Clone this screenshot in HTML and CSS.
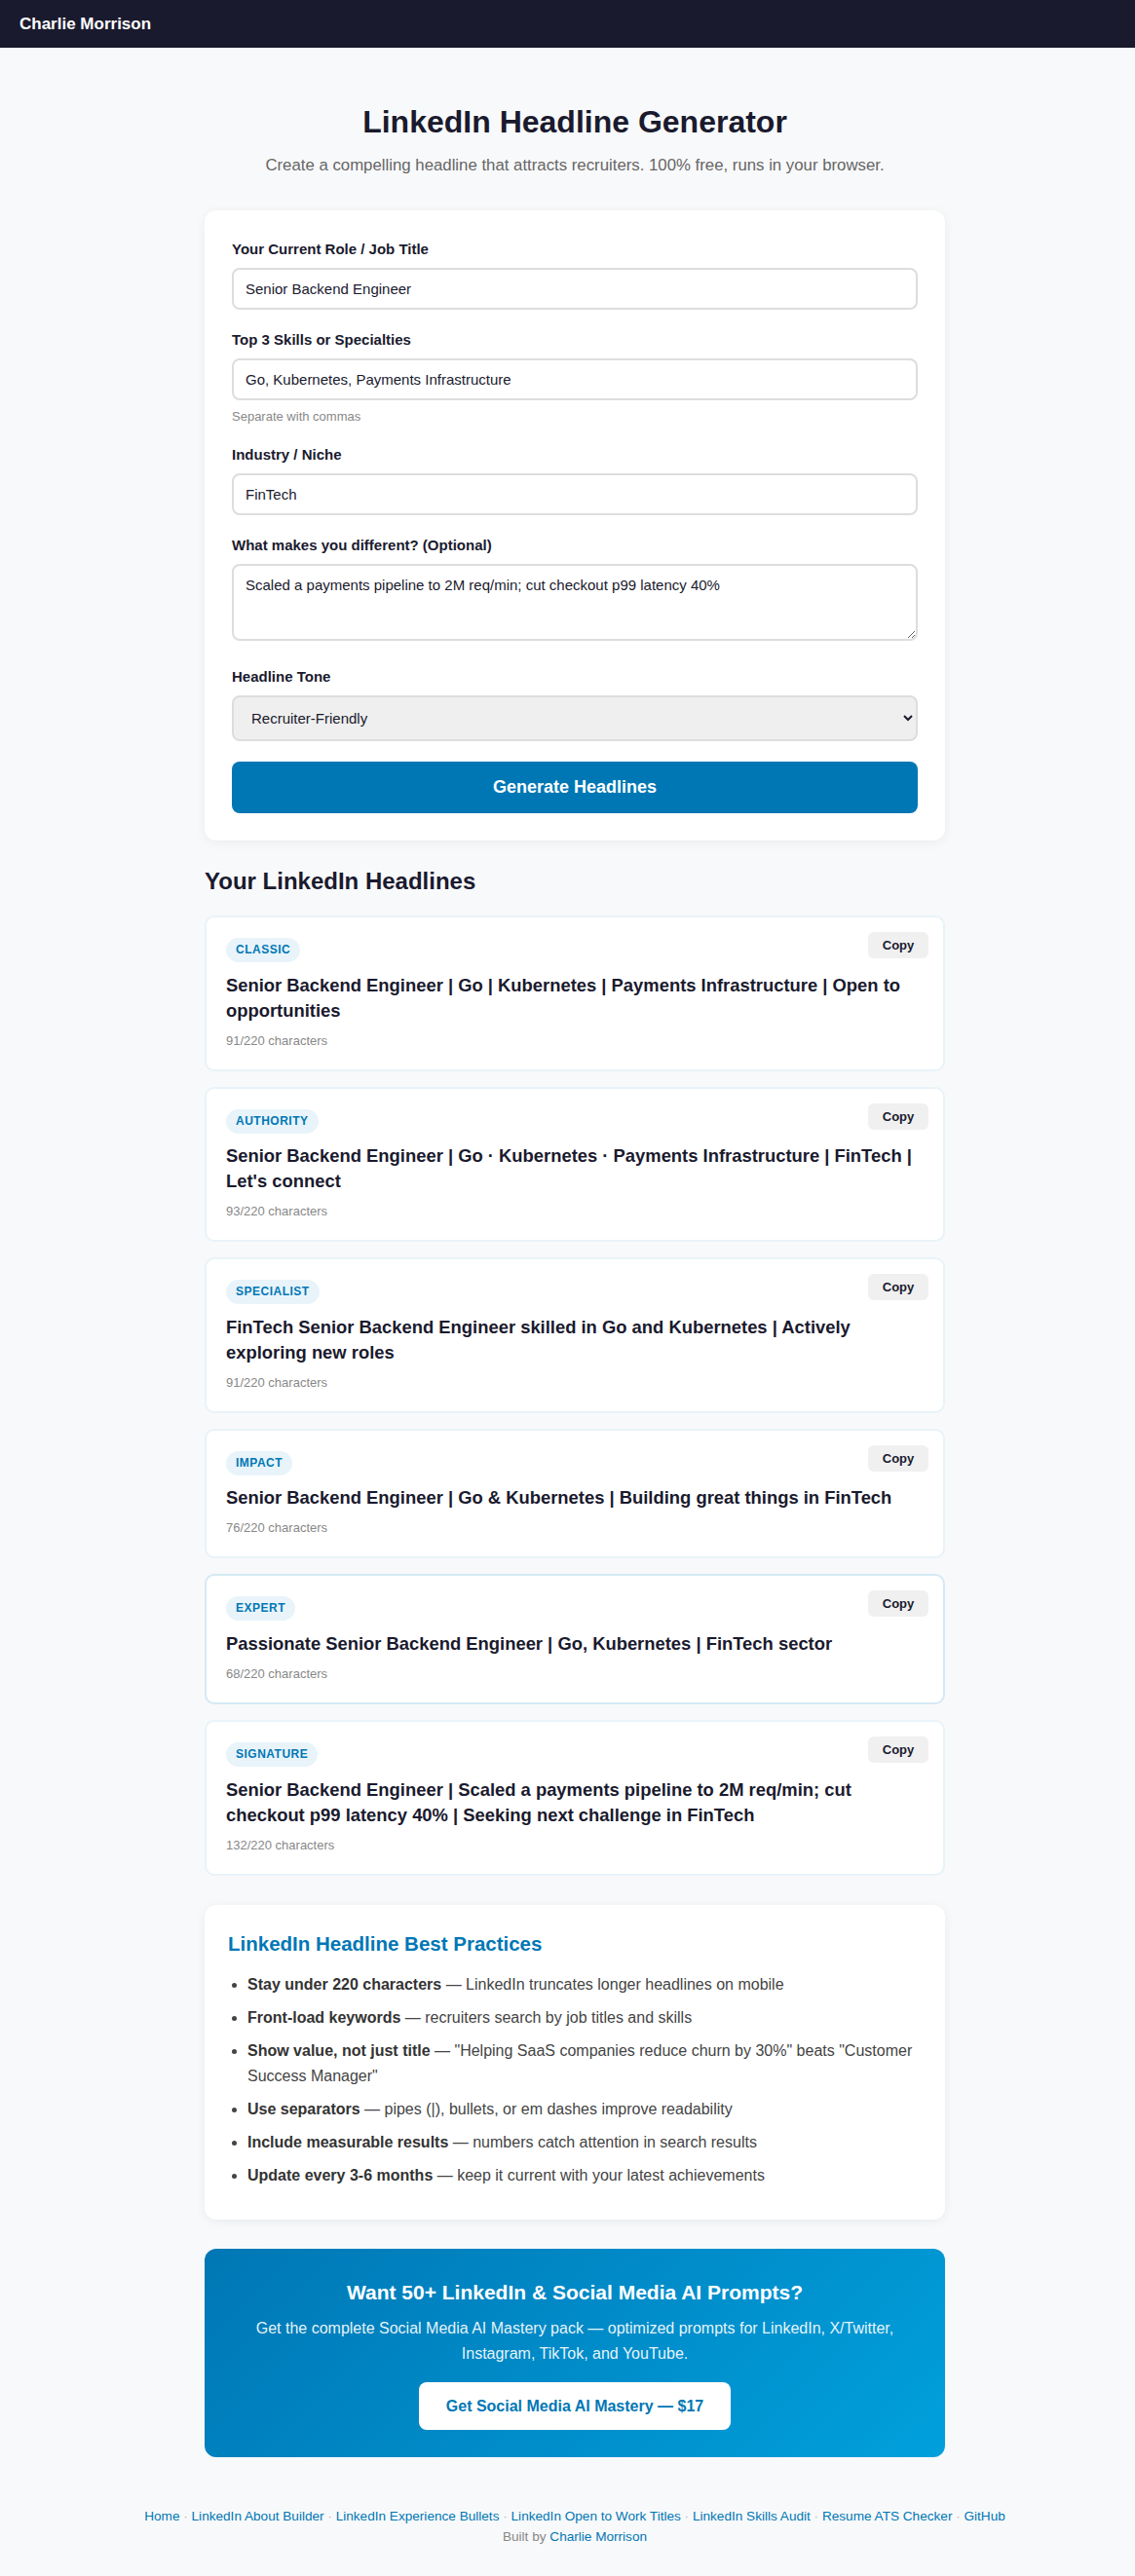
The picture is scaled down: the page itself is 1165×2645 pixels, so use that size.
FILE: index.html
```html
<!DOCTYPE html>
<html lang="en">
<head>
<meta charset="utf-8">
<title>LinkedIn Headline Generator — Charlie Morrison</title>
<link rel="stylesheet" href="styles.css">
</head>
<body>
<nav class="topbar">
  <a class="brand" href="#">Charlie Morrison</a>
</nav>

<main class="page">
  <div class="wrap">
    <header class="intro">
      <h1>LinkedIn Headline Generator</h1>
      <p class="lead">Create a compelling headline that attracts recruiters. 100% free, runs in your browser.</p>
    </header>

    <form class="panel" onsubmit="return false">
      <div class="field">
        <label for="role">Your Current Role / Job Title</label>
        <input id="role" type="text" value="Senior Backend Engineer">
      </div>
      <div class="field">
        <label for="skills">Top 3 Skills or Specialties</label>
        <input id="skills" type="text" value="Go, Kubernetes, Payments Infrastructure">
        <div class="hint">Separate with commas</div>
      </div>
      <div class="field">
        <label for="industry">Industry / Niche</label>
        <input id="industry" type="text" value="FinTech">
      </div>
      <div class="field field-area">
        <label for="diff">What makes you different? (Optional)</label>
        <textarea id="diff" rows="3">Scaled a payments pipeline to 2M req/min; cut checkout p99 latency 40%</textarea>
      </div>
      <div class="field">
        <label for="tone">Headline Tone</label>
        <select id="tone">
          <option selected>Recruiter-Friendly</option>
          <option>Professional</option>
          <option>Bold</option>
        </select>
      </div>
      <button class="generate" type="button">Generate Headlines</button>
    </form>

    <section class="results">
      <h2>Your LinkedIn Headlines</h2>
      <div class="result-list">
        <article class="result">
          <span class="badge">Classic</span>
          <button class="copy" type="button">Copy</button>
          <p class="headline">Senior Backend Engineer | Go | Kubernetes | Payments Infrastructure | Open to opportunities</p>
          <div class="count">91/220 characters</div>
        </article>
        <article class="result">
          <span class="badge">Authority</span>
          <button class="copy" type="button">Copy</button>
          <p class="headline">Senior Backend Engineer | Go · Kubernetes · Payments Infrastructure | FinTech | Let's connect</p>
          <div class="count">93/220 characters</div>
        </article>
        <article class="result">
          <span class="badge">Specialist</span>
          <button class="copy" type="button">Copy</button>
          <p class="headline">FinTech Senior Backend Engineer skilled in Go and Kubernetes | Actively exploring new roles</p>
          <div class="count">91/220 characters</div>
        </article>
        <article class="result">
          <span class="badge">Impact</span>
          <button class="copy" type="button">Copy</button>
          <p class="headline">Senior Backend Engineer | Go &amp; Kubernetes | Building great things in FinTech</p>
          <div class="count">76/220 characters</div>
        </article>
        <article class="result is-hover">
          <span class="badge">Expert</span>
          <button class="copy" type="button">Copy</button>
          <p class="headline">Passionate Senior Backend Engineer | Go, Kubernetes | FinTech sector</p>
          <div class="count">68/220 characters</div>
        </article>
        <article class="result">
          <span class="badge">Signature</span>
          <button class="copy" type="button">Copy</button>
          <p class="headline">Senior Backend Engineer | Scaled a payments pipeline to 2M req/min; cut checkout p99 latency 40% | Seeking next challenge in FinTech</p>
          <div class="count">132/220 characters</div>
        </article>
      </div>
    </section>

    <section class="tips">
      <h3>LinkedIn Headline Best Practices</h3>
      <ul>
        <li><strong>Stay under 220 characters</strong> — LinkedIn truncates longer headlines on mobile</li>
        <li><strong>Front-load keywords</strong> — recruiters search by job titles and skills</li>
        <li><strong>Show value, not just title</strong> — "Helping SaaS companies reduce churn by 30%" beats "Customer Success Manager"</li>
        <li><strong>Use separators</strong> — pipes (|), bullets, or em dashes improve readability</li>
        <li><strong>Include measurable results</strong> — numbers catch attention in search results</li>
        <li><strong>Update every 3-6 months</strong> — keep it current with your latest achievements</li>
      </ul>
    </section>

    <section class="cta">
      <h3>Want 50+ LinkedIn &amp; Social Media AI Prompts?</h3>
      <p>Get the complete Social Media AI Mastery pack — optimized prompts for LinkedIn, X/Twitter, Instagram, TikTok, and YouTube.</p>
      <a class="cta-button" href="#">Get Social Media AI Mastery — $17</a>
    </section>
  </div>
</main>

<footer class="site-foot">
  <div class="foot-links">
    <a href="#">Home</a><span class="sep"> · </span><a href="#">LinkedIn About Builder</a><span class="sep"> · </span><a href="#">LinkedIn Experience Bullets</a><span class="sep"> · </span><a href="#">LinkedIn Open to Work Titles</a><span class="sep"> · </span><a href="#">LinkedIn Skills Audit</a><span class="sep"> · </span><a href="#">Resume ATS Checker</a><span class="sep"> · </span><a href="#">GitHub</a>
  </div>
  <div class="credit">Built by <a href="#">Charlie Morrison</a></div>
</footer>
</body>
</html>
```

FILE: styles.css
```css
* {
  box-sizing: border-box;
}

html, body {
  margin: 0;
  padding: 0;
}

body {
  background: #f8f9fa;
  color: #1a1a2e;
  font-family: "Liberation Sans", Arial, Helvetica, sans-serif;
  font-size: 16px;
  line-height: 1.6;
}

a {
  color: #0077b5;
  text-decoration: none;
}

/* top bar */
.topbar {
  height: 49px;
  background: #1a1a2e;
  display: flex;
  align-items: center;
  padding: 0 20px;
}

.brand {
  color: #fff;
  font-weight: 700;
  font-size: 17px;
}

/* page column */
.page {
  padding-left: 15px;
}

.wrap {
  max-width: 760px;
  margin: 0 auto;
  padding-top: 57px;
}

.intro {
  text-align: center;
}

.intro h1 {
  margin: 0 0 13px;
  font-size: 32px;
  line-height: 38px;
  color: #1a1a2e;
}

.lead {
  margin: 0 0 33px;
  font-size: 16.8px;
  line-height: 26px;
  color: #666;
}

/* form */
.panel {
  background: #fff;
  border-radius: 12px;
  padding: 30px 28px 28px;
  box-shadow: 0 2px 12px rgba(0, 0, 0, 0.06);
}

.field {
  margin-bottom: 21px;
}

.field label {
  display: block;
  font-size: 15px;
  font-weight: 700;
  line-height: 20px;
  margin-bottom: 9px;
  color: #1a1a2e;
}

.field input,
.field textarea,
.field select {
  display: block;
  width: 100%;
  font-family: inherit;
  font-size: 15px;
  color: #1a1a2e;
  border: 2px solid #ddd;
  border-radius: 8px;
  background: #fff;
}

.field input {
  height: 43px;
  padding: 0 12px;
}

.field textarea {
  height: 79px;
  padding: 11px 12px;
  line-height: 18px;
  resize: vertical;
}

.field-area {
  margin-bottom: 27px;
}

.field select {
  height: 47px;
  padding: 0 14px;
  background: #efefef;
}

.hint {
  margin-top: 8px;
  font-size: 13px;
  line-height: 17px;
  color: #888;
}

.generate {
  display: block;
  width: 100%;
  height: 53px;
  margin-top: 17px;
  border: 0;
  border-radius: 8px;
  background: #0077b5;
  color: #fff;
  font-family: inherit;
  font-size: 18px;
  font-weight: 700;
  cursor: pointer;
}

/* results */
.results h2 {
  margin: 27px 0 20px;
  font-size: 24px;
  line-height: 30px;
  color: #1a1a2e;
}

.result-list {
  display: flex;
  flex-direction: column;
  gap: 16px;
}

.result {
  position: relative;
  background: #fff;
  border: 2px solid #e8f3f8;
  border-radius: 10px;
  padding: 21px 20px;
}

.result.is-hover {
  border-color: #d4e9f4;
}

.badge {
  display: inline-block;
  height: 25px;
  padding: 0 10px;
  border-radius: 13px;
  background: #e8f4fa;
  color: #0077b5;
  font-size: 12px;
  font-weight: 700;
  line-height: 25px;
  letter-spacing: 0.5px;
  text-transform: uppercase;
  vertical-align: top;
}

.copy {
  position: absolute;
  top: 15px;
  right: 15px;
  width: 62px;
  height: 27px;
  border: 0;
  border-radius: 6px;
  background: #f0f0f0;
  color: #1a1a2e;
  font-family: inherit;
  font-size: 13px;
  font-weight: 700;
  cursor: pointer;
}

.headline {
  margin: 10px 0 10px;
  font-size: 18.4px;
  font-weight: 700;
  line-height: 26px;
  color: #1a1a2e;
}

.count {
  font-size: 13px;
  line-height: 16px;
  color: #888;
}

/* best practices */
.tips {
  margin-top: 30px;
  background: #fff;
  border-radius: 12px;
  padding: 28px 24px 24px;
  box-shadow: 0 2px 12px rgba(0, 0, 0, 0.06);
}

.tips h3 {
  margin: 0 0 17px;
  font-size: 20.5px;
  line-height: 24px;
  color: #0077b5;
}

.tips ul {
  margin: 0;
  padding-left: 20px;
}

.tips li {
  margin-bottom: 8px;
  font-size: 16px;
  line-height: 26px;
  color: #444;
}

.tips li strong {
  color: #333;
}

/* promo box */
.cta {
  margin-top: 30px;
  padding: 32px 32px 28px;
  border-radius: 12px;
  background: linear-gradient(135deg, #0077b5 0%, #00a0dc 100%);
  color: #fff;
  text-align: center;
}

.cta h3 {
  margin: 0 0 11px;
  font-size: 21px;
  line-height: 26px;
}

.cta p {
  margin: 0 0 16px;
  font-size: 16px;
  line-height: 26px;
  color: rgba(255, 255, 255, 0.92);
}

.cta-button {
  display: inline-block;
  height: 49px;
  padding: 0 28px;
  line-height: 49px;
  border-radius: 8px;
  background: #fff;
  color: #0077b5;
  font-weight: 700;
  font-size: 16px;
}

/* footer */
.site-foot {
  padding: 50px 20px 32px 35px;
  text-align: center;
  font-size: 13.6px;
  line-height: 21px;
  color: #888;
}

.sep {
  color: #bbb;
}
```
